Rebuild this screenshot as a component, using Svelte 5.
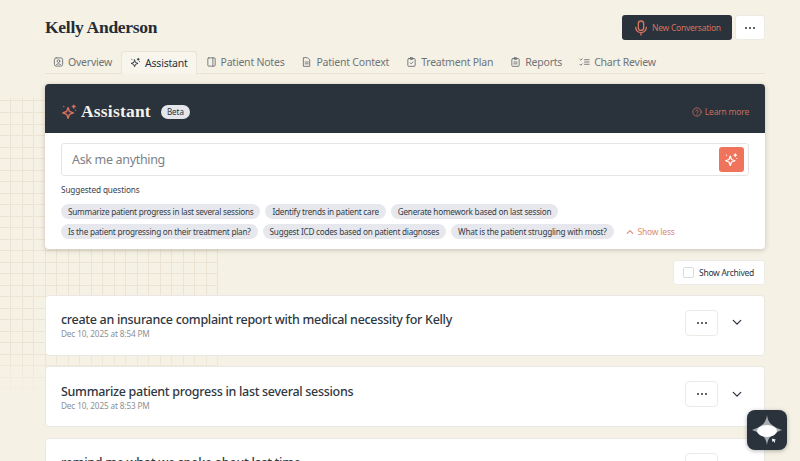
<script lang="ts">
    const tabs = [
        { label: "Overview", icon: "overview" },
        { label: "Assistant", icon: "spark", active: true },
        { label: "Patient Notes", icon: "notes" },
        { label: "Patient Context", icon: "doc" },
        { label: "Treatment Plan", icon: "plan" },
        { label: "Reports", icon: "reports" },
        { label: "Chart Review", icon: "chart" }
    ];

    const rowOne = [
        "Summarize patient progress in last several sessions",
        "Identify trends in patient care",
        "Generate homework based on last session"
    ];

    const rowTwo = [
        "Is the patient progressing on their treatment plan?",
        "Suggest ICD codes based on patient diagnoses",
        "What is the patient struggling with most?"
    ];

    const conversations = [
        { title: "create an insurance complaint report with medical necessity for Kelly", date: "Dec 10, 2025 at 8:54 PM" },
        { title: "Summarize patient progress in last several sessions", date: "Dec 10, 2025 at 8:53 PM" },
        { title: "remind me what we spoke about last time", date: "Dec 10, 2025 at 8:52 PM" }
    ];
</script>

{#snippet spark(size: number)}
    <svg width={size} height={size} viewBox="0 0 24 24" fill="none" stroke="currentColor" stroke-width="2" stroke-linejoin="round" stroke-linecap="round">
        <path d="M10 6.500 12 12l5.500 2-5.500 2-2 5.500L8 16l-5.500-2L8 12Z" />
        <path d="M18 3v4M16 5h4M20.500 10v.1M4 5v.1" />
    </svg>
{/snippet}

{#snippet tabIcon(name: string)}
    <svg width="11" height="12" viewBox="0 0 24 24" fill="none" stroke="currentColor" stroke-width="2" stroke-linejoin="round" stroke-linecap="round">
        {#if name === "overview"}
            <rect x="3" y="3" width="18" height="18" rx="4" />
            <circle cx="12" cy="10" r="3" />
            <path d="M7 18c1-3 9-3 10 0" />
        {:else if name === "notes"}
            <rect x="4" y="3" width="16" height="18" rx="2" />
            <path d="M15 3v18" />
        {:else if name === "doc"}
            <path d="M6 2.500h8l5 5V21.500H6Z" />
            <path d="M9 12h7M9 16h7" />
        {:else if name === "plan"}
            <rect x="4" y="4.500" width="16" height="17" rx="2" />
            <rect x="9" y="2.500" width="6" height="4" rx="1" />
            <path d="m9 14 2 2 4-4" />
        {:else if name === "reports"}
            <rect x="4" y="4.500" width="16" height="17" rx="2" />
            <rect x="9" y="2.500" width="6" height="4" rx="1" />
            <path d="M8.500 12h7M8.500 16h7" />
        {:else if name === "chart"}
            <path d="M12 7h10M12 12h10M12 17h10M2 6l2 2 3-3M2 17l2 2 3-3" />
        {/if}
    </svg>
{/snippet}

{#snippet dots()}
    <svg width="12" height="4" viewBox="0 0 12 4" fill="currentColor">
        <circle cx="2" cy="2" r="1" />
        <circle cx="6" cy="2" r="1" />
        <circle cx="10" cy="2" r="1" />
    </svg>
{/snippet}

<div class="grid-bg"></div>

<div class="page">
    <header class="top">
        <h1>Kelly Anderson</h1>
        <div class="top-actions">
            <button type="button" class="new-conv">
                <svg width="16" height="18" viewBox="0 0 24 24" fill="none" stroke="currentColor" stroke-width="2" stroke-linecap="round" stroke-linejoin="round">
                    <rect x="8" y="1.500" width="8" height="14" rx="4" />
                    <path d="M4 11a8 8 0 0 0 16 0M12 19v3.500" />
                </svg>
                New Conversation
            </button>
            <button type="button" class="more top-more">{@render dots()}</button>
        </div>
    </header>

    <nav class="tabs">
        {#each tabs as tab}
            <div class="tab" class:active={tab.active}>
                {#if tab.icon === "spark"}
                    {@render spark(11)}
                {:else}
                    {@render tabIcon(tab.icon)}
                {/if}
                <span>{tab.label}</span>
            </div>
        {/each}
    </nav>

    <section class="assistant">
        <div class="assistant-head">
            <div class="head-left">
                <span class="head-spark">{@render spark(17)}</span>
                <h2>Assistant</h2>
                <span class="beta">Beta</span>
            </div>
            <div class="learn">
                <svg width="10" height="10" viewBox="0 0 24 24" fill="none" stroke="currentColor" stroke-width="2" stroke-linecap="round" stroke-linejoin="round">
                    <circle cx="12" cy="12" r="10" />
                    <path d="M9 9.500a3 3 0 0 1 5.800 1c0 2-2.800 2.500-2.800 4M12 18v.1" />
                </svg>
                Learn more
            </div>
        </div>

        <div class="assistant-body">
            <div class="ask">
                <span>Ask me anything</span>
                <button type="button" class="send">{@render spark(15)}</button>
            </div>

            <div class="suggest-label">Suggested questions</div>

            <div class="chips">
                {#each rowOne as chip}
                    <span class="chip">{chip}</span>
                {/each}
            </div>
            <div class="chips">
                {#each rowTwo as chip}
                    <span class="chip">{chip}</span>
                {/each}
                <span class="less">
                    <svg width="8" height="6" viewBox="0 0 12 8" fill="none" stroke="currentColor" stroke-width="1.600" stroke-linecap="round" stroke-linejoin="round">
                        <path d="m2 6 4-4 4 4" />
                    </svg>
                    Show less
                </span>
            </div>
        </div>
    </section>

    <div class="archived-row">
        <label class="archived">
            <span class="check"></span>
            Show Archived
        </label>
    </div>

    <div class="list">
        {#each conversations as conv}
            <article class="card">
                <div class="card-text">
                    <div class="card-title">{conv.title}</div>
                    <div class="card-date">{conv.date}</div>
                </div>
                <button type="button" class="more card-more">{@render dots()}</button>
                <svg class="chev" width="10" height="7" viewBox="0 0 12 8" fill="none" stroke="currentColor" stroke-width="1.500" stroke-linecap="round" stroke-linejoin="round">
                    <path d="m1.500 1.500 4.500 4.500 4.500-4.500" />
                </svg>
            </article>
        {/each}
    </div>
</div>

<button type="button" class="fab" aria-label="Open assistant">
    <svg width="30" height="30" viewBox="0 0 30 30">
        <path d="M15 0c1 7 3.500 11 15 15-11.500 4-14 8-15 15-1-7-3.500-11-15-15C11.500 11 14 7 15 0Z" fill="#a9adb0" />
        <ellipse cx="15" cy="16" rx="10" ry="6" fill="#fff" />
        <path d="m20 23.500 4 1.200-1.400 1 .6 1.600-1 .3-.7-1.500-1.100.8Z" fill="#fff" />
    </svg>
</button>

<style>
    :global(body) {
        background: #f5f1e5;
        overflow: hidden;
    }

    .grid-bg {
        position: absolute;
        left: 0;
        top: 98px;
        width: 218px;
        height: 300px;
        background-image:
            repeating-linear-gradient(to right, transparent 0 10.500px, #ede3d2 10.500px 11.500px),
            repeating-linear-gradient(to bottom, transparent 0 10.500px, #ede3d2 10.500px 11.500px);
        background-position: 0 4px;
        -webkit-mask-image: linear-gradient(to bottom, #000 85%, transparent);
        mask-image: linear-gradient(to bottom, #000 85%, transparent);
    }

    .page {
        position: relative;
        height: 461px;
        overflow: hidden;
        box-sizing: border-box;
        padding: 15px 35px 0 45px;
        font-family: "Noto Sans", "Open Sans", sans-serif;
        color: #2a323c;
    }

    .top {
        display: flex;
        justify-content: space-between;
        align-items: center;
        height: 25px;
    }

    h1 {
        margin: 0;
        font-family: "Liberation Serif", serif;
        font-size: 17.500px;
        letter-spacing: -0.28px;
        font-weight: 700;
        color: #252c35;
    }

    .top-actions {
        display: flex;
        align-items: center;
        gap: 3px;
    }

    button {
        font-family: inherit;
        cursor: pointer;
    }

    .new-conv {
        display: flex;
        align-items: center;
        gap: 3px;
        height: 25px;
        width: 110px;
        padding: 0 0 0 11px;
        border: none;
        border-radius: 3px;
        background: #2a323c;
        color: #d4735f;
        font-size: 8.500px;
        letter-spacing: -0.25px;
        white-space: nowrap;
    }

    .more {
        display: flex;
        align-items: center;
        justify-content: center;
        padding: 0;
        background: #fff;
        border: 1px solid #ecebe6;
        color: #2a323c;
    }

    .top-more {
        width: 30px;
        height: 25px;
        border-radius: 3px;
    }

    .tabs {
        display: flex;
        align-items: flex-end;
        height: 23px;
        margin-top: 10px;
        border-bottom: 1px solid #e9e4d7;
    }

    .tab {
        display: flex;
        align-items: center;
        gap: 4px;
        height: 22px;
        box-sizing: border-box;
        padding: 0 8px 1px;
        margin-right: 1px;
        color: #6f7479;
        font-size: 10.500px;
        letter-spacing: -0.22px;
        white-space: nowrap;
    }

    .tab.active {
        color: #2a323c;
        background: #f8f5ec;
        border: 1px solid #e9e4d7;
        border-bottom: none;
        border-radius: 3px 3px 0 0;
        height: 23px;
        margin-bottom: -1px;
    }

    .assistant {
        margin-top: 10px;
        border-radius: 4px;
        overflow: hidden;
        background: #fff;
        box-shadow: 0 1px 5px rgba(60, 50, 30, 0.25);
    }

    .assistant-head {
        display: flex;
        justify-content: space-between;
        align-items: center;
        height: 49px;
        box-sizing: border-box;
        padding: 6px 16px 0;
        background: #2a323c;
    }

    .head-left {
        display: flex;
        align-items: center;
    }

    .head-spark {
        display: flex;
        color: #dc6f5c;
        margin-right: 3px;
    }

    h2 {
        margin: 0;
        font-family: "Liberation Serif", serif;
        font-size: 17.500px;
        font-weight: 700;
        color: #f4f2ec;
        letter-spacing: 0.2px;
    }

    .beta {
        margin-left: 10px;
        padding: 0 6px;
        height: 14px;
        line-height: 14px;
        border-radius: 7px;
        background: #e4e6ea;
        color: #2a323c;
        font-size: 8px;
    }

    .learn {
        display: flex;
        align-items: center;
        gap: 3px;
        color: #c4705f;
        font-size: 8.500px;
        letter-spacing: -0.2px;
    }

    .assistant-body {
        padding: 10px 16px 10px;
        height: 116px;
        box-sizing: border-box;
    }

    .ask {
        display: flex;
        align-items: center;
        justify-content: space-between;
        height: 33px;
        box-sizing: border-box;
        padding: 0 4px 0 10px;
        border: 1px solid #e5e5e5;
        border-radius: 3px;
        color: #7d8287;
        font-size: 12.500px;
        letter-spacing: -0.33px;
    }

    .send {
        display: flex;
        align-items: center;
        justify-content: center;
        width: 25px;
        height: 25px;
        padding: 0;
        border: none;
        border-radius: 3px;
        background: #f0745c;
        color: #fff;
    }

    .suggest-label {
        margin: 8px 0;
        font-size: 8.200px;
        letter-spacing: -0.1px;
        line-height: 12px;
        color: #3a424c;
    }

    .chips {
        display: flex;
        align-items: center;
        gap: 5px;
        margin-bottom: 5px;
    }

    .chip {
        height: 15px;
        line-height: 15px;
        padding: 0 7px;
        border-radius: 8px;
        background: #e6e8ed;
        color: #343c46;
        font-size: 8.200px;
        letter-spacing: -0.24px;
        white-space: nowrap;
    }

    .less {
        display: flex;
        align-items: center;
        gap: 4px;
        margin-left: 7px;
        color: #d98a78;
        font-size: 8.500px;
        letter-spacing: -0.2px;
        white-space: nowrap;
    }

    .archived-row {
        display: flex;
        justify-content: flex-end;
        margin-top: 11px;
    }

    .archived {
        display: flex;
        align-items: center;
        gap: 5px;
        width: 92px;
        height: 25px;
        box-sizing: border-box;
        padding-left: 9px;
        background: #fff;
        border: 1px solid #ecebe6;
        border-radius: 3px;
        font-size: 8.500px;
        letter-spacing: -0.27px;
        white-space: nowrap;
    }

    .check {
        width: 11px;
        height: 11px;
        box-sizing: border-box;
        border: 1px solid #d9dbde;
        border-radius: 2px;
    }

    .list {
        display: flex;
        flex-direction: column;
        gap: 10.500px;
        margin-top: 9.800px;
    }

    .card {
        display: flex;
        align-items: center;
        flex-shrink: 0;
        height: 61px;
        box-sizing: border-box;
        padding: 0 22px 0 15px;
        background: #fff;
        border: 1px solid #eae8e2;
        border-radius: 4px;
    }

    .card-text {
        flex: 1;
    }

    .card-title {
        font-size: 12.500px;
        letter-spacing: -0.3px;
        font-weight: 500;
        line-height: 17px;
        color: #2f3741;
    }

    .card-date {
        font-size: 8.200px;
        letter-spacing: -0.13px;
        line-height: 11px;
        color: #8b8f94;
    }

    .card-more {
        width: 33px;
        height: 26px;
        border-radius: 4px;
        margin-bottom: 5px;
    }

    .chev {
        margin: 0 0 5px 14px;
        color: #2a323c;
    }

    .fab {
        position: fixed;
        left: 747px;
        top: 410px;
        display: flex;
        align-items: center;
        justify-content: center;
        width: 40px;
        height: 40px;
        padding: 0;
        border: none;
        border-radius: 8px;
        background: #2a323c;
        box-shadow: 0 1px 4px rgba(0, 0, 0, 0.3);
    }
</style>
